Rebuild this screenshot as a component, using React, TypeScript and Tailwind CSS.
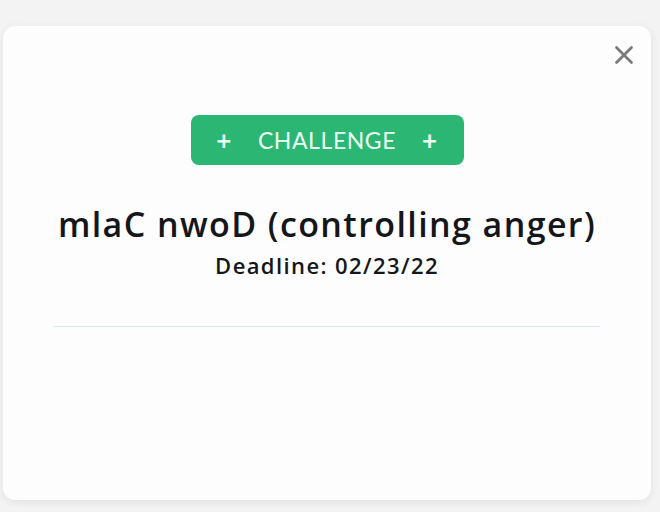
import { X } from "lucide-react";

export default function App() {
  return (
    <div
      className="h-[512px] w-[660px] bg-[#f3f3f3] pt-[26px] pl-[3px]"
      style={{ fontFamily: "Lato, 'Noto Sans', sans-serif" }}
    >
      <div className="relative flex h-[474px] w-[648px] flex-col items-center rounded-xl bg-[#fdfdfd] shadow-[0_2px_8px_rgba(0,0,0,0.08)]">
        <button type="button" aria-label="Close" className="absolute right-[12px] top-[14px] text-[#7a7a7a]">
          <X size={30} strokeWidth={2.2} />
        </button>

        <div className="mt-[89px] flex h-[50px] w-[273px] items-center justify-center gap-[26px] rounded-lg bg-[#2bb673] text-[23px] tracking-wide text-[#eafff2]">
          <span className="text-[26px] font-bold">+</span>
          <span>CHALLENGE</span>
          <span className="text-[26px] font-bold">+</span>
        </div>

        <div className="flex flex-col items-center font-['Open_Sans',sans-serif] text-[#15161a]">
          <h1 className="mt-[37px] text-[34px] leading-[44px] font-semibold tracking-[1.4px]">
            mlaC nwoD (controlling anger)
          </h1>
          <p className="mt-[5px] text-[22px] leading-[28px] font-semibold tracking-[1.4px]">Deadline: 02/23/22</p>
        </div>

        <div className="mt-[47px] h-px w-[546px] bg-[#dde7f4]" />
      </div>
    </div>
  );
}
